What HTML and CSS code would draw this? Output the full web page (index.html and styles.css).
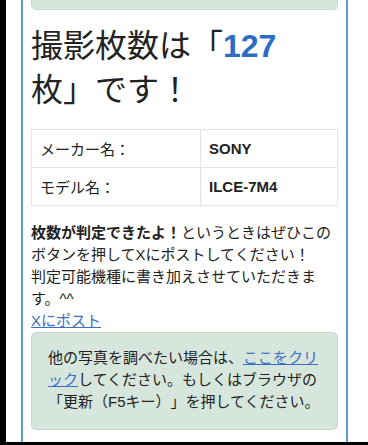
FILE: index.html
```html
<!DOCTYPE html>
<html lang="ja">
<head>
<meta charset="utf-8">
<link rel="stylesheet" href="styles.css">
</head>
<body>
<div class="screen">
  <div class="frame">
    <div class="notice notice-top"></div>
    <h1 class="count">撮影枚数は「<span class="num">127</span>枚」です！</h1>
    <table class="spec">
      <tr><td class="label">メーカー名：</td><td class="value">SONY</td></tr>
      <tr><td class="label">モデル名：</td><td class="value">ILCE-7M4</td></tr>
    </table>
    <p class="share"><strong>枚数が判定できたよ！</strong>というときはぜひこのボタンを押してXにポストしてください！<br>判定可能機種に書き加えさせていただきます。^^<br><a href="#" class="link">Xにポスト</a></p>
    <div class="notice">
      <p class="notice-text">他の写真を調べたい場合は、<a href="#" class="link">ここをクリック</a>してください。もしくはブラウザの「更新（F5キー）」を押してください。</p>
    </div>
  </div>
</div>
</body>
</html>
```
FILE: styles.css
```css
html, body {
  margin: 0;
  padding: 0;
  background: #000;
}
body {
  width: 368px;
  height: 445px;
  overflow: hidden;
  font-family: "Liberation Sans", "Noto Sans CJK JP", sans-serif;
  color: #222;
  text-spacing-trim: space-all;
}
.screen {
  margin-left: 6px;
  height: 442px;
  background: #fff;
  overflow: hidden;
  padding-left: 15px;
}
.frame {
  width: 307px;
  height: 442px;
  border-left: 2px solid #5b9bd5;
  border-right: 2px solid #5b9bd5;
  padding: 0 8px;
  background: #fff;
}
.notice {
  background: #d6e6dd;
  border: 1px solid #c4d8cc;
  border-radius: 5px;
  padding: 14px 16px 16px;
}
.notice-top {
  height: 9px;
  padding: 0;
  border-top: none;
  border-radius: 0 0 5px 5px;
}
.count {
  margin: 14px 0 17px;
  font-size: 32px;
  line-height: 44px;
  font-weight: normal;
  color: #222;
}
.num {
  font-weight: bold;
  color: #2d6cc4;
}
.spec {
  width: 100%;
  border-collapse: collapse;
  font-size: 15px;
}
.spec td {
  border: 1px solid #e4e4e4;
  height: 37px;
  padding: 0 8px;
  vertical-align: middle;
}
.label {
  width: 152px;
}
.value {
  font-weight: bold;
}
.share {
  margin: 16px 0 0;
  font-size: 15px;
  line-height: 22px;
}
.link {
  color: #3b6fc6;
  text-decoration: underline;
}
.notice-text {
  margin: 0;
  font-size: 15px;
  line-height: 22px;
  color: #222;
}
```
